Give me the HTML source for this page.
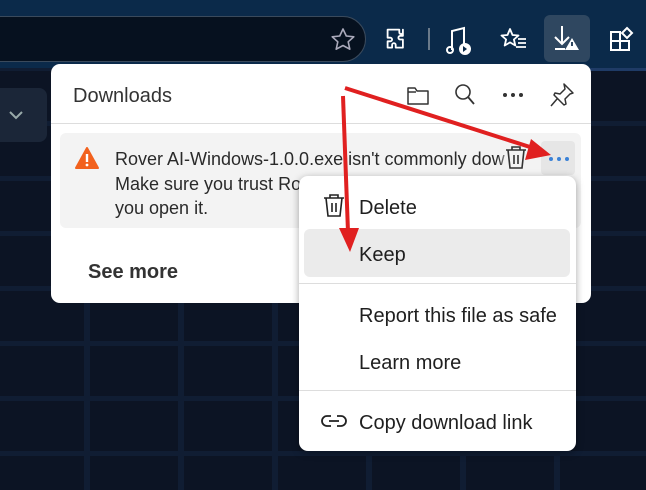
<!DOCTYPE html>
<html><head><style>
*{margin:0;padding:0;box-sizing:border-box}
body{width:646px;height:490px;overflow:hidden;position:relative;font-family:"Liberation Sans",sans-serif;background:#0c1424}
.grid{position:absolute;left:0;top:66px;width:646px;height:424px;
background-image:linear-gradient(90deg,#101d33 0 6px,transparent 6px),linear-gradient(180deg,#101d33 0 5px,transparent 5px);
background-size:94px 55px;background-position:84px 0px}
.top{position:absolute;left:0;top:0;width:646px;height:68px;background:#0b2a4a}
.addr{position:absolute;left:-30px;top:16px;width:396px;height:46px;border-radius:23px;background:#06111f;border:1px solid #3a4a5c}
.panel{position:absolute;left:51px;top:64px;width:540px;height:239px;background:#fff;border-radius:9px}
.menu{position:absolute;left:299px;top:176px;width:277px;height:275px;background:#fff;border-radius:9px;box-shadow:0 2px 8px rgba(0,0,0,.35)}
.t{position:absolute;color:#1f1f1f;white-space:nowrap}
.m{font-size:20px;left:60px}
svg{position:absolute;overflow:visible}
</style></head><body>
<div class="grid"></div>
<div class="top"></div>
<div class="addr"></div>
<div style="position:absolute;left:0;top:88px;width:47px;height:54px;border-radius:0 8px 8px 0;background:#1b2638"></div>
<svg style="left:8px;top:110px" width="16" height="10"><path d="M2 2l6 6 6-6" stroke="#9aa" stroke-width="2" fill="none"/></svg>
<svg style="left:330px;top:27px" width="26" height="26"><path d="M13 2l3.3 7 7.5.8-5.6 5 1.6 7.4L13 18.5 6.2 22.2l1.6-7.4-5.6-5 7.5-.8z" fill="none" stroke="#aab" stroke-width="1.6" stroke-linejoin="round"/></svg>
<svg style="left:382px;top:26px" width="30" height="30"><path d="M11 4h6v3a2 2 0 0 0 4 0V4h0v7h-3a2 2 0 0 0 0 4h3v9h-8v-3a2 2 0 0 0-4 0v3H4v-7h3a2 2 0 0 0 0-4H4V4z" fill="none" stroke="#fff" stroke-width="2" stroke-linejoin="round" transform="translate(2,0) scale(.9)"/></svg>
<div style="position:absolute;left:428px;top:28px;width:2px;height:22px;background:#6a7a8a"></div>
<svg style="left:444px;top:26px" width="30" height="30"><path d="M8 24V5l12-3v16" fill="none" stroke="#fff" stroke-width="2"/><circle cx="6" cy="24" r="3" fill="none" stroke="#fff" stroke-width="2"/><circle cx="21" cy="23" r="6" fill="#fff"/><path d="M19 20l4 3-4 3z" fill="#0b2a4a"/></svg>
<svg style="left:500px;top:27px" width="30" height="26"><path d="M10 2l2.5 6 6 .5-4.6 4 1.4 6L10 15.4 4.7 18.5l1.4-6-4.6-4 6-.5z" fill="none" stroke="#fff" stroke-width="1.8" stroke-linejoin="round"/><path d="M18 12h8M18 16h8M16 20h10" stroke="#fff" stroke-width="1.8"/></svg>
<div style="position:absolute;left:544px;top:15px;width:46px;height:47px;border-radius:6px;background:#2f4760"></div>
<svg style="left:552px;top:24px" width="32" height="32"><path d="M10 2v18M3 13l7 7 7-7M3 25h10" fill="none" stroke="#fff" stroke-width="2"/><path d="M20 14l7 12H13z" fill="#fff"/><path d="M20 18v4" stroke="#2f4760" stroke-width="2"/></svg>
<svg style="left:608px;top:26px" width="30" height="30"><path d="M3 6h9v9H3zM3 15h9v9H3zM12 15h9v9h-9z" fill="none" stroke="#fff" stroke-width="2"/><path d="M19 2l5 5-5 5-5-5z" fill="none" stroke="#fff" stroke-width="2"/></svg>
<div style="position:absolute;left:590px;top:68px;width:56px;height:3px;background:#1f3b66"></div>

<div class="panel">
<div class="t" style="left:22px;top:21px;font-size:20px;color:#333">Downloads</div>
<svg style="left:355px;top:20px" width="24" height="22"><path d="M2 4h7l2 3h11v13H2z" fill="none" stroke="#333" stroke-width="1.5" stroke-linejoin="round"/><path d="M2 8h8" stroke="#333" stroke-width="1.5"/></svg>
<svg style="left:402px;top:19px" width="24" height="24"><circle cx="10" cy="9" r="7" fill="none" stroke="#333" stroke-width="1.6"/><path d="M15 14l6 7" stroke="#333" stroke-width="1.8"/></svg>
<svg style="left:451px;top:28px" width="22" height="6"><circle cx="3" cy="3" r="2" fill="#333"/><circle cx="11" cy="3" r="2" fill="#333"/><circle cx="19" cy="3" r="2" fill="#333"/></svg>
<svg style="left:498px;top:18px" width="26" height="26"><path d="M15 2l9 9-3 1-5 5 1 5-2 1-10-10 1-2 5 1 5-5z M8 17l-6 7" fill="none" stroke="#333" stroke-width="1.5" stroke-linejoin="round"/></svg>
<div style="position:absolute;left:0;top:59px;width:540px;height:1px;background:#ddd"></div>
<div style="position:absolute;left:9px;top:69px;width:521px;height:95px;background:#f3f3f3;border-radius:6px"></div>
<svg style="left:24px;top:83px" width="24" height="22"><path d="M12 1L23 21H1z" fill="#f2611d" stroke="#f2611d" stroke-width="2" stroke-linejoin="round"/><path d="M12 7v8" stroke="#fff" stroke-width="2.4"/><circle cx="12" cy="18" r="1.4" fill="#fff"/></svg>
<div class="t" style="left:64px;top:83px;font-size:18px;line-height:24.5px;color:#2a2a2a">Rover AI-Windows-1.0.0.exe isn't commonly dow<br>Make sure you trust Rover AI-Windows-1.0.0<br>you open it.</div>
<div style="position:absolute;left:447px;top:74px;width:60px;height:40px;background:linear-gradient(90deg,rgba(243,243,243,0),#f3f3f3 25%)"></div>
<svg style="left:453px;top:81px" width="24" height="26"><path d="M2 5h20M8 5V2h8v3M4 5l2 18h12l2-18M10 10v9M14 10v9" fill="none" stroke="#333" stroke-width="1.6"/></svg>
<div style="position:absolute;left:490px;top:77px;width:34px;height:34px;background:#e6e6e6;border-radius:4px"></div>
<svg style="left:497px;top:92px" width="22" height="6"><circle cx="3" cy="3" r="2" fill="#3b82d6"/><circle cx="11" cy="3" r="2" fill="#3b82d6"/><circle cx="19" cy="3" r="2" fill="#3b82d6"/></svg>
<div class="t" style="left:37px;top:197px;font-size:20px;font-weight:bold;color:#333">See more</div>
</div>

<div class="menu">
<svg style="left:23px;top:17px" width="24" height="26"><path d="M2 5h20M8 5V2h8v3M4 5l2 18h12l2-18M10 10v9M14 10v9" fill="none" stroke="#222" stroke-width="1.6"/></svg>
<div class="t m" style="top:21px">Delete</div>
<div style="position:absolute;left:5px;top:53px;width:266px;height:48px;background:#ebebeb;border-radius:6px"></div>
<div class="t m" style="top:68px">Keep</div>
<div style="position:absolute;left:0;top:107px;width:277px;height:1px;background:#ddd"></div>
<div class="t m" style="top:129px">Report this file as safe</div>
<div class="t m" style="top:176px">Learn more</div>
<div style="position:absolute;left:0;top:214px;width:277px;height:1px;background:#ddd"></div>
<svg style="left:22px;top:238px" width="26" height="14"><path d="M10 2H6a5 5 0 0 0 0 10h4M16 2h4a5 5 0 0 1 0 10h-4M8 7h10" fill="none" stroke="#222" stroke-width="1.8"/></svg>
<div class="t m" style="top:236px">Copy download link</div>
</div>

<svg style="left:0;top:0" width="646" height="490">
<path d="M345 88L530 147" stroke="#e02020" stroke-width="4"/>
<path d="M551 155L525 160L531 139z" fill="#e02020"/>
<path d="M343 96L348 232" stroke="#e02020" stroke-width="4"/>
<path d="M350 252L339 228L359 228z" fill="#e02020"/>
</svg>
</body></html>
